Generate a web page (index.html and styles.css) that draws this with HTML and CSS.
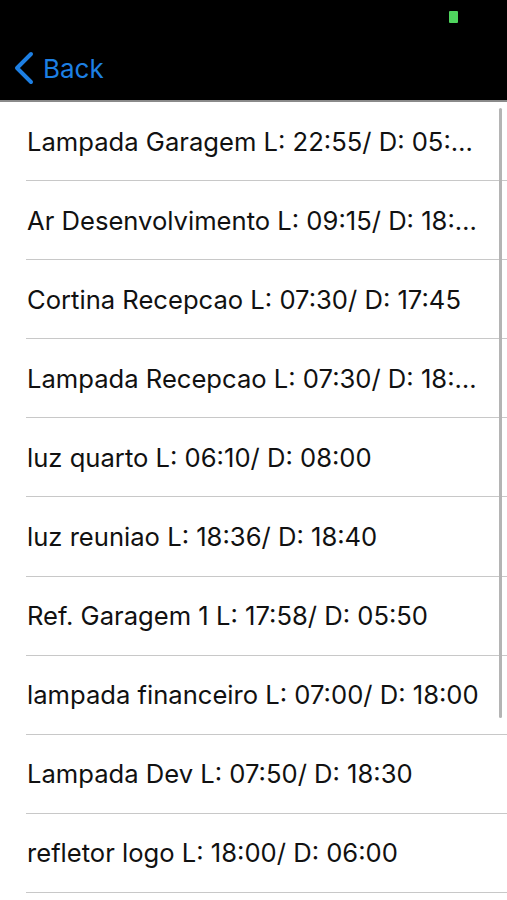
FILE: index.html
```html
<!DOCTYPE html>
<html lang="pt">
<head>
    <meta charset="UTF-8">
    <title>Agendamentos</title>
    <link rel="stylesheet" href="styles.css">
</head>
<body>
<div class="nav-bar">
    <div class="status-bar">
        <span class="battery"></span>
    </div>
    <div class="nav-row">
        <a class="back" href="#">
            <svg class="chevron" width="24" height="34" viewBox="0 0 24 34">
                <path d="M19 3 L5 17 L19 31" fill="none" stroke="#1d7fe3" stroke-width="4" stroke-linecap="round" stroke-linejoin="round"/>
            </svg>
            <span>Back</span>
        </a>
    </div>
</div>
<div class="list">
    <div class="row"><span class="title">Lampada Garagem L: 22:55/ D: 05:…</span></div>
    <div class="row"><span class="title">Ar Desenvolvimento L: 09:15/ D: 18:…</span></div>
    <div class="row"><span class="title">Cortina Recepcao L: 07:30/ D: 17:45</span></div>
    <div class="row"><span class="title">Lampada Recepcao L: 07:30/ D: 18:…</span></div>
    <div class="row"><span class="title">luz quarto L: 06:10/ D: 08:00</span></div>
    <div class="row"><span class="title">luz reuniao L: 18:36/ D: 18:40</span></div>
    <div class="row"><span class="title">Ref. Garagem 1 L: 17:58/ D: 05:50</span></div>
    <div class="row"><span class="title">lampada financeiro L: 07:00/ D: 18:00</span></div>
    <div class="row"><span class="title">Lampada Dev L: 07:50/ D: 18:30</span></div>
    <div class="row"><span class="title">refletor logo L: 18:00/ D: 06:00</span></div>
    <div class="scroll-indicator"></div>
</div>
</body>
</html>
```

FILE: styles.css
```css
* {
    margin: 0;
    padding: 0;
    box-sizing: border-box;
}

body {
    width: 507px;
    height: 900px;
    overflow: hidden;
    background: #fff;
    font-family: Inter, "Liberation Sans", sans-serif;
}

.nav-bar {
    height: 102px;
    background: #000;
    border-bottom: 2px solid #8a8a8a;
}

.status-bar {
    height: 40px;
    display: flex;
    justify-content: flex-end;
    padding: 11px 49px 0 0;
}

.battery {
    display: block;
    width: 9px;
    height: 12px;
    background: #4fd55e;
    border-radius: 1px;
}

.nav-row {
    height: 60px;
    display: flex;
    align-items: center;
    padding-left: 12px;
}

.back {
    display: flex;
    align-items: center;
    gap: 7px;
    color: #1d7fe3;
    text-decoration: none;
    font-size: 26px;
    margin-top: -4px;
}

.list {
    position: relative;
}

.row {
    height: 79.1px;
    margin-left: 26px;
    border-bottom: 1.5px solid #c8c8c8;
    display: flex;
    align-items: center;
    padding-right: 24px;
}

.title {
    display: block;
    padding-left: 1px;
    font-size: 25.6px;
    color: #111;
    white-space: nowrap;
    overflow: hidden;
    text-overflow: ellipsis;
}

.scroll-indicator {
    position: absolute;
    top: 6px;
    right: 5px;
    width: 3px;
    height: 610px;
    border-radius: 2px;
    background: #b4b4b4;
}
```
